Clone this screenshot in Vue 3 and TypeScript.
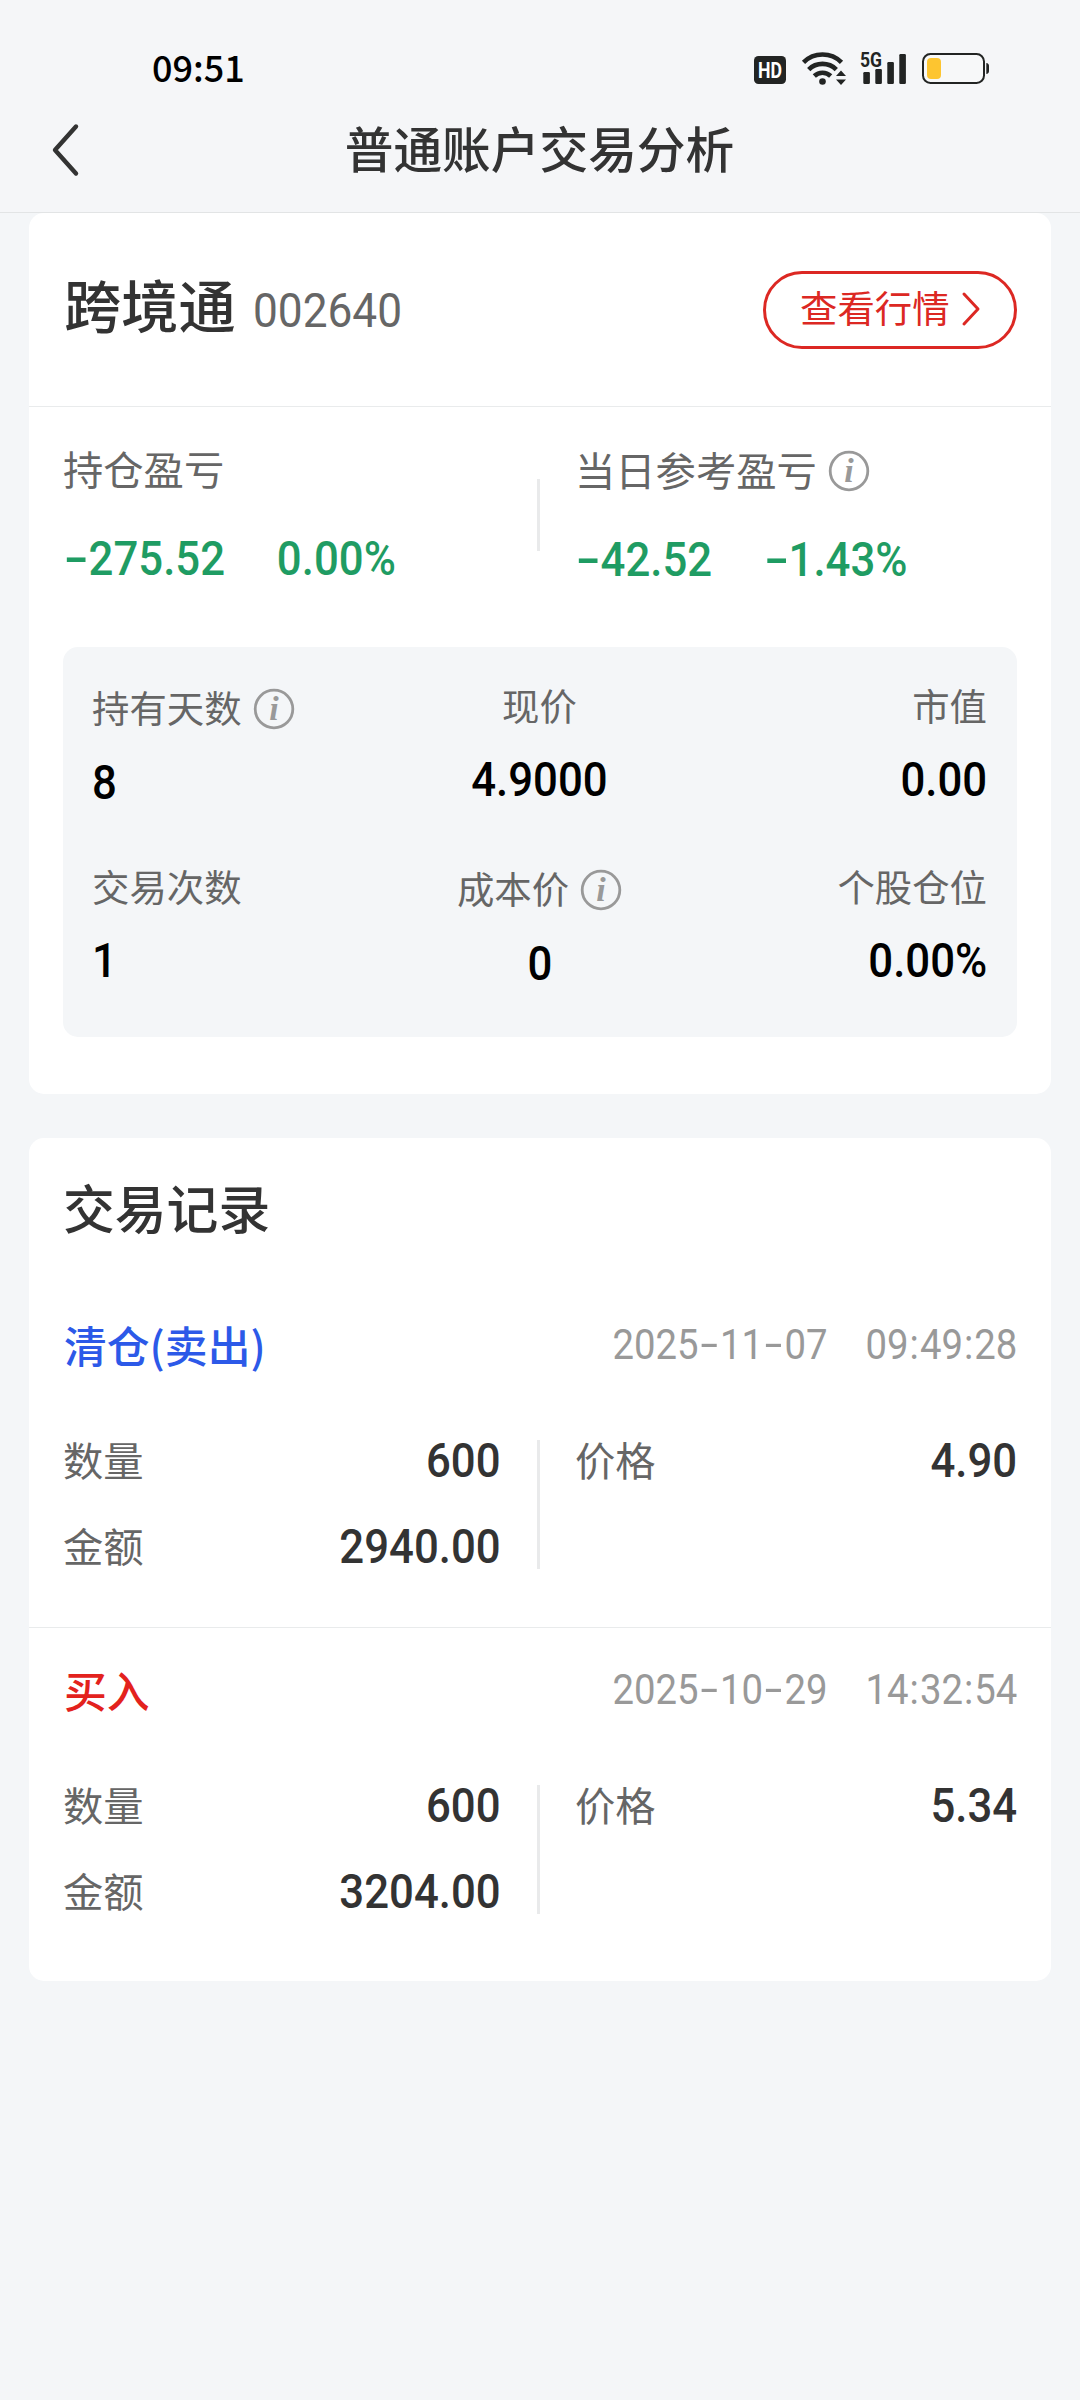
<script setup lang="ts">
interface Metric {
  label: string
  value: string
  info?: boolean
}

interface TradeRecord {
  kind: 'sell' | 'buy'
  title: string
  date: string
  time: string
  quantity: string
  amount: string
  price: string
}

const metrics: Metric[] = [
  { label: '持有天数', value: '8', info: true },
  { label: '现价', value: '4.9000' },
  { label: '市值', value: '0.00' },
  { label: '交易次数', value: '1' },
  { label: '成本价', value: '0', info: true },
  { label: '个股仓位', value: '0.00%' },
]

const records: TradeRecord[] = [
  {
    kind: 'sell',
    title: '清仓(卖出)',
    date: '2025-11-07',
    time: '09:49:28',
    quantity: '600',
    amount: '2940.00',
    price: '4.90',
  },
  {
    kind: 'buy',
    title: '买入',
    date: '2025-10-29',
    time: '14:32:54',
    quantity: '600',
    amount: '3204.00',
    price: '5.34',
  },
]

// Splits out hyphens and colons so that they can be spaced on their own.
const parts = (text: string): string[] => text.split(/([-:])/).filter(Boolean)
</script>

<template>
  <div class="page">
    <header class="top">
      <div class="status">
        <span class="clock">09:51</span>
        <svg class="status-icons" width="240" height="40" viewBox="752 48 240 40">
          <rect x="754" y="56" width="32" height="28" rx="4.5" fill="#222423" />
          <text x="770" y="78" class="hd" text-anchor="middle" textLength="24" lengthAdjust="spacingAndGlyphs">HD</text>
          <g fill="none" stroke="#222423" stroke-width="4.6">
            <path d="M803.5 62.3 A27 27 0 0 1 841.5 62.3" />
            <path d="M808.7 69.6 A19.5 19.5 0 0 1 836.3 69.6" />
            <path d="M814.3 76 A12 12 0 0 1 830.7 76" />
          </g>
          <circle cx="822.5" cy="81.5" r="3.3" fill="#222423" />
          <path d="M841 70.5 L846 76 H836 Z M841 85 L846 79.5 H836 Z" fill="#222423" />
          <text x="860" y="67" class="fiveg" textLength="22" lengthAdjust="spacingAndGlyphs">5G</text>
          <g fill="#222423">
            <rect x="863.3" y="72" width="6.6" height="12" rx="1.2" />
            <rect x="875.3" y="69" width="6.6" height="15" rx="1.2" />
            <rect x="887.3" y="62" width="6.6" height="22" rx="1.2" />
            <rect x="899.3" y="54" width="6.6" height="30" rx="1.2" />
          </g>
          <rect x="923" y="54" width="61" height="29" rx="7.5" fill="#f7f8f9" stroke="#222423" stroke-width="2" />
          <rect x="927" y="58" width="14" height="21" rx="4" fill="#fdc530" />
          <path d="M986.3 63 Q989 63.4 989 66 V71 Q989 73.6 986.3 74 Z" fill="#222423" />
        </svg>
      </div>
      <div class="nav">
        <svg class="back" width="30" height="56" viewBox="0 0 30 56">
          <path d="M25 4.5 L4 28 L25 51.5" fill="none" stroke="#333" stroke-width="4.4" stroke-linecap="round" stroke-linejoin="round" />
        </svg>
        <h1>普通账户交易分析</h1>
      </div>
    </header>

    <section class="card summary">
      <div class="stock">
        <h2>跨境通</h2>
        <span class="num code">002640</span>
        <button type="button" class="quote">
          <span>查看行情</span>
          <svg width="20" height="36" viewBox="0 0 20 36">
            <path d="M3 3 L17 18 L3 33" fill="none" stroke="#dc2823" stroke-width="3" stroke-linecap="round" stroke-linejoin="round" />
          </svg>
        </button>
      </div>

      <div class="profit">
        <div class="profit-col">
          <div class="label">持仓盈亏</div>
          <div class="num pair">
            <span><span v-for="(p, i) in parts('-275.52')" :key="i" :class="{ dash: p === '-' }">{{ p }}</span></span>
            <span>0.00%</span>
          </div>
        </div>
        <i class="split"></i>
        <div class="profit-col today">
          <div class="label">
            当日参考盈亏
            <svg class="info" width="42" height="42" viewBox="0 0 42 42">
              <circle cx="21" cy="21" r="18.8" />
              <text x="21" y="32" text-anchor="middle">i</text>
            </svg>
          </div>
          <div class="num pair">
            <span><span v-for="(p, i) in parts('-42.52')" :key="i" :class="{ dash: p === '-' }">{{ p }}</span></span>
            <span><span v-for="(p, i) in parts('-1.43%')" :key="i" :class="{ dash: p === '-' }">{{ p }}</span></span>
          </div>
        </div>
      </div>

      <div class="metrics">
        <div v-for="m in metrics" :key="m.label" class="metric" :class="{ noted: m.info }">
          <div class="metric-label">
            {{ m.label }}
            <svg v-if="m.info" class="info" width="42" height="42" viewBox="0 0 42 42">
              <circle cx="21" cy="21" r="18.8" />
              <text x="21" y="32" text-anchor="middle">i</text>
            </svg>
          </div>
          <div class="num metric-value">{{ m.value }}</div>
        </div>
      </div>
    </section>

    <section class="card history">
      <h3>交易记录</h3>
      <article v-for="r in records" :key="r.date" class="record">
        <div class="record-head">
          <span class="kind" :class="r.kind">{{ r.title }}</span>
          <span class="num stamp">
            <span><span v-for="(p, i) in parts(r.date)" :key="i" :class="{ dash: p === '-' }">{{ p }}</span></span>
            <span><span v-for="(p, i) in parts(r.time)" :key="i" :class="{ colon: p === ':' }">{{ p }}</span></span>
          </span>
        </div>
        <div class="record-body">
          <dl>
            <div><dt>数量</dt><dd class="num">{{ r.quantity }}</dd></div>
            <div><dt>金额</dt><dd class="num">{{ r.amount }}</dd></div>
          </dl>
          <i class="split"></i>
          <dl>
            <div><dt>价格</dt><dd class="num">{{ r.price }}</dd></div>
          </dl>
        </div>
      </article>
    </section>
  </div>
</template>

<style>
body {
  margin: 0;
  background: #f4f6f8;
}
</style>

<style scoped>
.page {
  width: 1080px;
  height: 2400px;
  overflow: hidden;
  background: #f4f6f8;
  color: #333;
  font-family: 'Noto Sans CJK SC', sans-serif;
}
h1, h2, h3, dl, dd {
  margin: 0;
  font-weight: 500;
}
.num {
  font-family: Roboto, 'Noto Sans CJK SC', sans-serif;
  font-size: 49px;
  font-weight: 500;
  white-space: nowrap;
  transform: scaleX(0.893);
  transform-origin: left center;
}
.dash {
  display: inline-block;
  width: 0.5615em;
  text-align: center;
  transform: scaleX(1.65) translateY(-0.02em);
}
.colon {
  padding: 0 1.1px;
}

.top {
  box-sizing: border-box;
  height: 213px;
  border-bottom: 1px solid #e2e4e5;
  background: #f5f6f8;
}
.status {
  display: flex;
  align-items: center;
  justify-content: space-between;
  height: 88px;
  padding: 0 88px 0 152px;
}
.clock {
  color: #000;
  font-size: 36px;
  font-weight: 500;
  line-height: 40px;
  padding-top: 43px;
}
.status-icons {
  margin-top: 48px;
}
.hd {
  fill: #fff;
  font: 700 22px Roboto, sans-serif;
}
.fiveg {
  fill: #222423;
  font: 700 21px Roboto, sans-serif;
}
.nav {
  display: flex;
  align-items: center;
  height: 122px;
  padding: 0 51px;
}
.back {
  margin-top: 2px;
}
.nav h1 {
  flex: 1;
  margin-right: 31px;
  text-align: center;
  font-size: 48.7px;
  line-height: 60px;
  margin-top: -5px;
}

.card {
  margin: 0 29px;
  background: #fff;
  border-radius: 15px;
}
.summary {
  height: 881px;
}
.stock {
  box-sizing: border-box;
  display: flex;
  align-items: center;
  height: 194px;
  padding: 0 34px 0 35px;
  border-bottom: 1px solid #e9ebec;
}
.stock h2 {
  font-size: 57.2px;
  line-height: 70px;
  padding-bottom: 14px;
}
.code {
  margin-left: 17px;
  padding-top: 2px;
  color: #666;
  font-weight: 400;
  transform: scaleX(0.902);
}
.quote {
  box-sizing: border-box;
  display: flex;
  align-items: center;
  gap: 11px;
  width: 254px;
  height: 78px;
  margin-left: auto;
  padding: 0 0 5px 34px;
  border: 3px solid #dc2823;
  border-radius: 39px;
  background: #fff;
  color: #dc2823;
  font: 400 37.4px/44px 'Noto Sans CJK SC', sans-serif;
}
.quote svg {
  margin-top: 4px;
}

.profit {
  display: flex;
  height: 240px;
  padding: 0 34px;
}
.profit-col {
  box-sizing: border-box;
  width: 474px;
  padding-top: 36px;
}
.profit-col.today {
  padding-top: 37px;
  padding-left: 35px;
}
.label {
  display: flex;
  align-items: center;
  gap: 11px;
  height: 50px;
  color: #666;
  font-size: 40.3px;
  line-height: 50px;
}
.pair {
  display: flex;
  gap: 58px;
  margin-top: 36px;
  margin-left: 1px;
  color: #1f9c63;
  line-height: 60px;
}
.split {
  flex: none;
  width: 3px;
  background: #e9eaeb;
}
.profit .split {
  height: 72px;
  margin-top: 72px;
}
.info {
  flex: none;
  margin-top: 3px;
}
.info circle {
  fill: none;
  stroke: #999;
  stroke-width: 2.8;
}
.info text {
  fill: #999;
  font: italic 700 34px 'Liberation Serif', serif;
}

.metrics {
  box-sizing: border-box;
  display: grid;
  grid-template-columns: 1fr 1fr 1fr;
  grid-template-rows: 181px 181px;
  height: 390px;
  margin: 0 34px;
  padding: 35px 30px 0 29px;
  border-radius: 15px;
  background: #f4f6f8;
}
.metric {
  display: flex;
  flex-direction: column;
}
.metric-label {
  display: flex;
  align-items: center;
  gap: 11px;
  height: 46px;
  color: #666;
  font-size: 37.4px;
}
.metric-value {
  margin-top: 22px;
  color: #000;
  line-height: 60px;
}
.noted .metric-label {
  height: 50px;
}
.noted .metric-value {
  margin-top: 21px;
}
.metric:nth-child(3n + 2) {
  align-items: center;
}
.metric:nth-child(3n + 2) .metric-value {
  transform-origin: center;
}
.metric:nth-child(3n) {
  align-items: flex-end;
}
.metric:nth-child(3n) .metric-value {
  transform-origin: right center;
}

.history {
  height: 843px;
  margin-top: 44px;
}
.history h3 {
  height: 144px;
  padding-left: 34px;
  font-size: 51.8px;
  line-height: 137px;
}
.record {
  box-sizing: border-box;
  height: 345px;
}
.record + .record {
  border-top: 1px solid #e9ebec;
}
.record-head {
  display: flex;
  align-items: center;
  justify-content: space-between;
  height: 62px;
  padding: 31px 34px 0 35px;
}
.record + .record .record-head {
  padding-top: 30px;
}
.kind {
  font-size: 42.8px;
  font-weight: 500;
  line-height: 60px;
  padding-bottom: 1px;
}
.kind.sell {
  color: #2c59e8;
}
.kind.buy {
  color: #e3221d;
}
.stamp {
  display: flex;
  gap: 42px;
  color: #999;
  font-size: 42.3px;
  font-weight: 400;
  transform: scaleX(0.905);
  transform-origin: right center;
}
.record-body {
  display: flex;
  margin-top: 65px;
  padding: 0 34px;
}
.record-body dl {
  width: 438px;
}
.record-body .split {
  height: 129px;
  margin: 0 35px 0 36px;
}
.record-body dl + .split + dl {
  flex: 1;
}
.record-body dl > div {
  display: flex;
  align-items: center;
  justify-content: space-between;
  height: 40px;
  margin-bottom: 46px;
}
.record-body dt {
  color: #666;
  font-size: 40.3px;
  font-weight: 400;
  line-height: 50px;
  padding-bottom: 3px;
}
.record-body dd {
  transform-origin: right center;
}
</style>
